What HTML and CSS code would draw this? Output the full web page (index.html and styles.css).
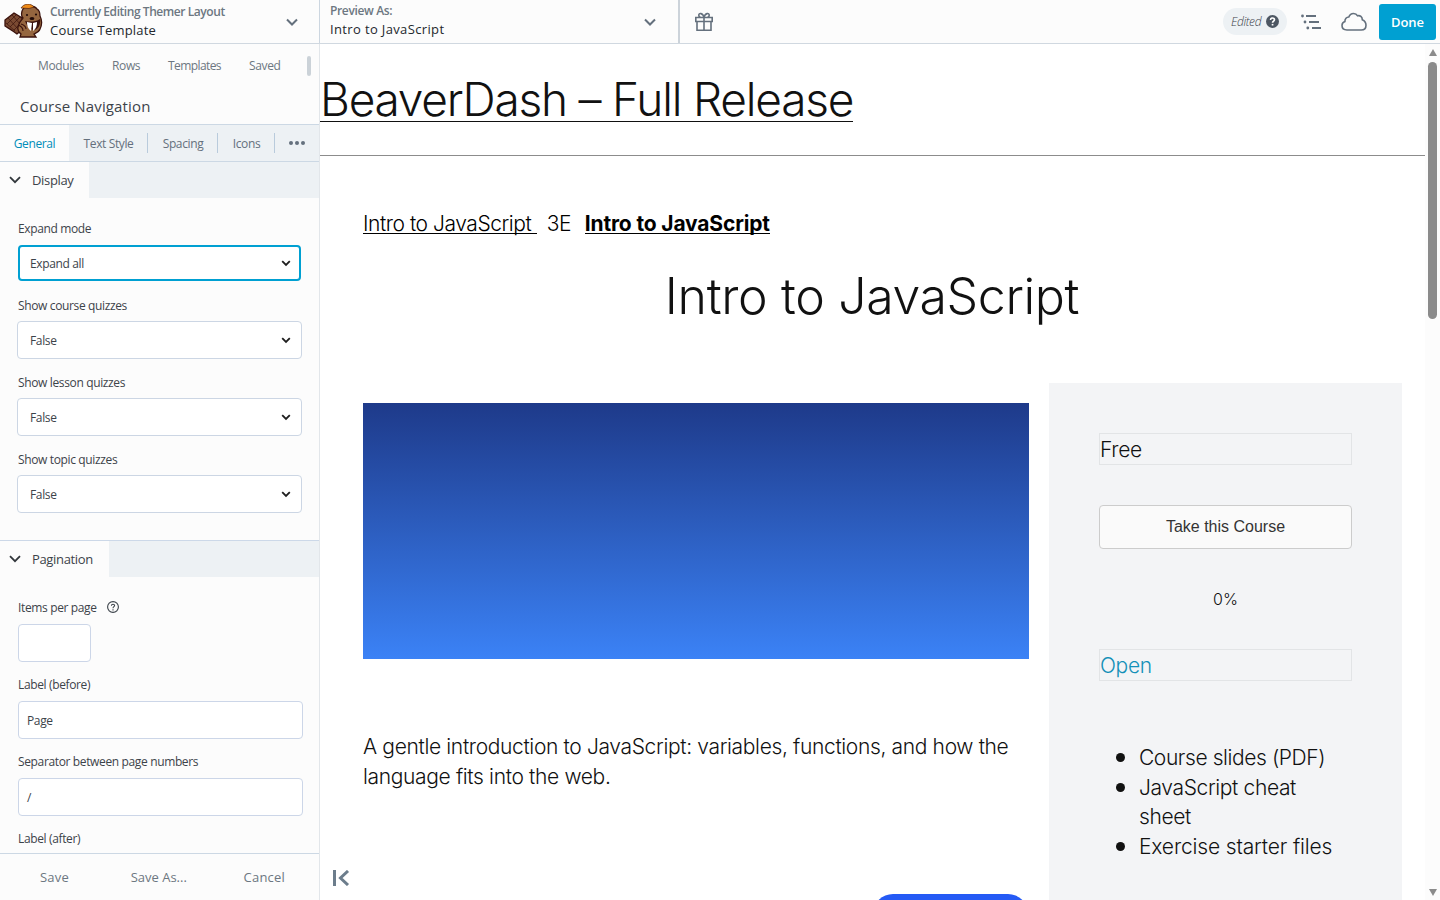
FILE: index.html
```html
<!DOCTYPE html>
<html lang="en">
<head>
    <meta charset="UTF-8">
    <meta name="viewport" content="width=device-width, initial-scale=1.0">
    <title>Course Template</title>
    <link rel="stylesheet" href="styles.css">
</head>
<body>
    <header class="topbar">
        <div class="layout-menu">
            <svg class="logo" viewBox="0 0 39 34" width="39" height="34">
                <path d="M1 16l9-7 8 5 1 11-6 5C8 26 4 24 1 22z" fill="#7a4a32" stroke="#3a120c" stroke-width="1.300"/>
                <path d="M4 14l11 12M8 11l9 10M2 19l9 8M3 20l9-9M6 23l10-10M10 26l8-8" stroke="#3a120c" stroke-width=".7" fill="none"/>
                <path d="M19 5c2-4 11-4 14 0 2 1 3 4 3 7 2 4 2 9 0 13-1 3-4 4-6 5l2 3H16l1-3c-3-2-4-6-2-10 1-3 3-4 4-6-2-2-2-6 0-9z" fill="#95663f" stroke="#3a120c" stroke-width="1.300"/>
                <path d="M17 4c3-5 10-5 13-1l-5 1.500z" fill="#ee8a17" stroke="#3a120c" stroke-width=".6"/>
                <path d="M14 21c3 1 5 3 5 6M17 20c3 1 5 3 5 5" stroke="#3a120c" stroke-width="1.100" fill="none"/>
                <path d="M21 17c4 1 11 1 15-2 1 5-2 11-6 11-4 0-7-4-9-9z" fill="#3a120c"/>
                <path d="M23 18l5 1-1 8c-3-2-4-5-4-9zM29 19l4-1c0 4-1 7-4 9z" fill="#fff"/>
                <ellipse cx="28" cy="14.500" rx="2.400" ry="1.600" fill="#210b08"/>
                <circle cx="23" cy="11" r="1.100" fill="#210b08"/>
                <circle cx="32" cy="10.500" r="1.100" fill="#210b08"/>
            </svg>
            <div class="menu-text">
                <div class="menu-label"><span class="t-editing">Currently Editing Themer Layout</span></div>
                <div class="menu-value"><span class="t-template">Course Template</span></div>
            </div>
            <svg class="chevron" width="14" height="14" viewBox="0 0 14 14"><path d="M2 4.500l5 5 5-5"/></svg>
        </div>
        <div class="preview-menu">
            <div class="menu-text">
                <div class="menu-label"><span class="t-preview">Preview As:</span></div>
                <div class="menu-value"><span class="t-previewed">Intro to JavaScript</span></div>
            </div>
            <svg class="chevron" width="14" height="14" viewBox="0 0 14 14"><path d="M2 4.500l5 5 5-5"/></svg>
        </div>
        <div class="actions">
            <svg class="gift" width="20" height="20" viewBox="0 0 20 20">
                <path d="M1.800 5.500h16.400v4H1.800zM3 9.500h14v8.700H3zM10 5.500v12.700M10 5.300C9 1 4.500.5 4.800 3.300c.1 1.300 1 2 2 2M10 5.300c1-4.300 5.500-4.800 5.200-2-.1 1.300-1 2-2 2"/>
            </svg>
            <div class="status">
                <span class="t-edited">Edited</span>
                <svg width="13" height="13" viewBox="0 0 13 13">
                    <circle cx="6.500" cy="6.500" r="6.500" fill="#4d5763"/>
                    <path d="M4.500 5c0-2.600 4-2.500 4-.2 0 1.500-2 1.400-2 2.900" fill="none" stroke="#fff" stroke-width="1.600"/>
                    <rect x="5.700" y="8.900" width="1.700" height="1.600" fill="#fff"/>
                </svg>
            </div>
            <svg class="outline" width="20" height="16" viewBox="0 0 20 16">
                <path d="M5 2h10M8 8h10M11 14h9" stroke="#64707d" stroke-width="1.800"/>
                <circle cx="1.500" cy="2" r="1.400" fill="#64707d"/>
                <circle cx="4" cy="8" r="1.400" fill="#64707d"/>
                <circle cx="6.800" cy="14" r="1.400" fill="#64707d"/>
            </svg>
            <svg class="cloud" width="26" height="20" viewBox="0 0 26 20">
                <path d="M6 18C2.800 18 1 16 1 13.600c0-2 1.300-3.500 2.900-4C3.800 6.800 5.500 5 7.800 5 8.800 2.500 10.400 1.500 12.500 1.500c1.800 0 3.300.9 4.100 2.300 2.400-.6 4.800 1 4.700 4 2.200 1 3.700 3 3.700 5.400 0 2.900-2 4.800-4.800 4.800z"/>
            </svg>
            <button class="done">Done</button>
        </div>
    </header>

    <div class="workspace">
        <aside class="panel">
            <nav class="panel-nav">
                <span class="nav-modules">Modules</span>
                <span class="nav-rows">Rows</span>
                <span class="nav-templates">Templates</span>
                <span class="nav-saved">Saved</span>
                <i class="handle"></i>
            </nav>
            <h2 class="panel-title">Course Navigation</h2>
            <div class="tabs">
                <div class="tab tab-general active">General</div>
                <div class="tab tab-text">Text Style</div>
                <div class="tab tab-spacing">Spacing</div>
                <div class="tab tab-icons">Icons</div>
                <div class="tab tab-more"><i></i><i></i><i></i></div>
            </div>
            <div class="settings">
                <section class="section">
                    <div class="section-head">
                        <div class="section-name display">
                            <svg width="12" height="8" viewBox="0 0 12 8"><path d="M1 1.200l5 5 5-5"/></svg>
                            <span>Display</span>
                        </div>
                    </div>
                    <div class="fields">
                        <div class="field">
                            <label>Expand mode</label>
                            <div class="select focused"><span>Expand all</span><svg width="10" height="7" viewBox="0 0 10 7"><path d="M1.200 1.200L5 5l3.800-3.800"/></svg></div>
                        </div>
                        <div class="field">
                            <label>Show course quizzes</label>
                            <div class="select"><span>False</span><svg width="10" height="7" viewBox="0 0 10 7"><path d="M1.200 1.200L5 5l3.800-3.800"/></svg></div>
                        </div>
                        <div class="field">
                            <label>Show lesson quizzes</label>
                            <div class="select"><span>False</span><svg width="10" height="7" viewBox="0 0 10 7"><path d="M1.200 1.200L5 5l3.800-3.800"/></svg></div>
                        </div>
                        <div class="field">
                            <label>Show topic quizzes</label>
                            <div class="select"><span>False</span><svg width="10" height="7" viewBox="0 0 10 7"><path d="M1.200 1.200L5 5l3.800-3.800"/></svg></div>
                        </div>
                    </div>
                </section>
                <section class="section bordered">
                    <div class="section-head">
                        <div class="section-name pagination">
                            <svg width="12" height="8" viewBox="0 0 12 8"><path d="M1 1.200l5 5 5-5"/></svg>
                            <span>Pagination</span>
                        </div>
                    </div>
                    <div class="fields">
                        <div class="field">
                            <label>Items per page</label>
                            <svg class="help" width="12" height="12" viewBox="0 0 12 12">
                                <circle cx="6" cy="6" r="5.400"/>
                                <path d="M4.400 4.800c0-2 3.200-1.900 3.200-.2C7.600 5.700 6 5.700 6 7.200M6 8.200v1.200"/>
                            </svg>
                            <div class="input small"></div>
                        </div>
                        <div class="field">
                            <label>Label (before)</label>
                            <div class="input">Page</div>
                        </div>
                        <div class="field">
                            <label>Separator between page numbers</label>
                            <div class="input">/</div>
                        </div>
                        <div class="field">
                            <label>Label (after)</label>
                        </div>
                    </div>
                </section>
            </div>
            <footer class="panel-footer">
                <span>Save</span>
                <span class="save-as">Save As...</span>
                <span>Cancel</span>
            </footer>
        </aside>

        <main class="canvas">
            <div class="site-header"><a class="site-title">BeaverDash – Full Release</a></div>
            <div class="page">
                <div class="breadcrumbs"><a class="crumb">Intro to JavaScript&nbsp;</a><span class="crumb-sep">3E</span><a class="crumb-current">Intro to JavaScript</a></div>
                <h1 class="page-title">Intro to JavaScript</h1>
                <div class="columns">
                    <div class="content">
                        <div class="cover"></div>
                        <p class="intro">A gentle introduction to JavaScript: variables, functions, and how the language fits into the web.</p>
                    </div>
                    <div class="card">
                        <div class="box">Free</div>
                        <button class="take">Take this Course</button>
                        <div class="progress">0%</div>
                        <div class="box open">Open</div>
                        <ul class="materials">
                            <li class="slides">Course slides (PDF)</li>
                            <li class="cheat">JavaScript cheat sheet</li>
                            <li class="files">Exercise starter files</li>
                        </ul>
                    </div>
                </div>
            </div>
            <div class="pill"></div>
            <svg class="collapse" width="17" height="16" viewBox="0 0 17 16"><path d="M1.500 0v16M15 1L7.500 8l7.500 7"/></svg>
        </main>
        <div class="scrollbar">
            <i class="arrow-up"></i>
            <i class="thumb"></i>
            <i class="arrow-down"></i>
        </div>
    </div>
</body>
</html>
```
FILE: styles.css
```css
* {
    margin: 0;
    padding: 0;
    box-sizing: border-box;
}

body {
    width: 1440px;
    height: 900px;
    overflow: hidden;
    background: #fff;
    font-family: "Open Sans", "Noto Sans", sans-serif;
    font-size: 12px;
    color: #3c434a;
}

span, label, a {
    display: inline-block;
    white-space: nowrap;
}

/* Top bar */
.topbar {
    display: flex;
    height: 44px;
    background: #fcfcfc;
    border-bottom: 1px solid #d0d8e0;
}

.layout-menu {
    display: flex;
    width: 320px;
    padding: 3px 20px 0 4px;
    border-right: 1px solid #ccd6e0;
}

.logo {
    flex: none;
    margin: 1px 7px 0 0;
}

.menu-text {
    flex: 1;
}

.menu-label {
    height: 18px;
    line-height: 18px;
    font-weight: 600;
    letter-spacing: -0.44px;
    color: #6c7781;
}

.menu-value {
    height: 18px;
    line-height: 18px;
    font-size: 13px;
    color: #23282d;
}

.t-preview {
    letter-spacing: -0.36px;
}

.t-template {
    letter-spacing: 0.2px;
}

.t-previewed {
    letter-spacing: 0.36px;
}

.chevron {
    margin-top: 12px;
    fill: none;
    stroke: #64707d;
    stroke-width: 2;
}

.preview-menu {
    display: flex;
    width: 360px;
    padding: 2px 21px 0 10px;
    border-right: 2px solid #ccd3da;
}

.preview-menu .chevron {
    margin-top: 13px;
}

.actions {
    flex: 1;
    display: flex;
    align-items: center;
    padding: 0 4px 0 14px;
}

.gift, .cloud {
    fill: none;
    stroke: #64707d;
    stroke-width: 1.6;
}

.status {
    display: flex;
    align-items: center;
    justify-content: space-between;
    width: 64px;
    height: 27px;
    margin: 0 14px 0 auto;
    padding: 0 8px;
    border-radius: 14px;
    background: #edf1f4;
    font-size: 12px;
    font-style: italic;
    font-weight: 300;
    letter-spacing: -0.4px;
}

.cloud {
    margin: 1px 12px 0 20px;
}

.done {
    width: 57px;
    height: 36px;
    border: 0;
    border-radius: 3px;
    background: #00a0d2;
    color: #fff;
    font: 600 13px "Open Sans", sans-serif;
}

.workspace {
    display: flex;
    height: 856px;
}

/* Settings panel */
.panel {
    display: flex;
    flex-direction: column;
    width: 320px;
    background: #fcfcfc;
    border-right: 1px solid #e2e6ea;
}

.panel-nav {
    display: flex;
    align-items: center;
    height: 44px;
    padding: 0 8px 0 38px;
    letter-spacing: -0.35px;
    color: #6c7781;
}

.nav-modules { width: 74px; }
.nav-rows { width: 56px; }
.nav-templates { width: 81px; letter-spacing: -0.58px; }

.panel-nav span {
    margin-top: -1px;
}

.handle {
    width: 4px;
    height: 20px;
    margin-left: auto;
    border-radius: 2px;
    background: #cbd2d8;
}

.panel-title {
    height: 37px;
    padding-left: 20px;
    line-height: 37px;
    border-bottom: 1px solid #ccd8e4;
    font-size: 15px;
    font-weight: 400;
    letter-spacing: 0.15px;
}

.tabs {
    display: flex;
    height: 37px;
    background: #edf1f4;
    border-bottom: 1px solid #ccd8e4;
    letter-spacing: -0.38px;
    color: #64707d;
}

.tab {
    position: relative;
    line-height: 38px;
    text-align: center;
    white-space: nowrap;
}

.tab + .tab + .tab::before {
    content: "";
    position: absolute;
    left: -1px;
    top: 8px;
    width: 1px;
    height: 20px;
    background: #b9cbdc;
}

.tab-general { width: 69px; }
.tab-text { width: 79px; }
.tab-spacing { width: 70px; }
.tab-icons { width: 57px; }

.tab.active {
    background: #fcfcfc;
    color: #008db9;
}

.tab-more {
    display: flex;
    align-items: center;
    gap: 2px;
    padding: 0 0 1px 14px;
}

.tab-more i {
    width: 4px;
    height: 4px;
    border-radius: 50%;
    background: #64707d;
}

.settings {
    flex: 1;
    overflow: hidden;
}

.section.bordered {
    border-top: 1px solid #ccd8e8;
}

.section-head {
    background: #edf1f4;
    height: 36px;
}

.section-name {
    display: flex;
    align-items: center;
    gap: 11px;
    height: 36px;
    padding-left: 9px;
    background: #fcfcfc;
    font-size: 13px;
    letter-spacing: -0.34px;
}

.section-name svg {
    fill: none;
    stroke: #32373c;
    stroke-width: 1.8;
}

.display { width: 89px; }
.pagination { width: 109px; }

.fields {
    padding: 21px 17px 13px;
    letter-spacing: -0.36px;
}

.field {
    height: 77px;
}

.field label {
    height: 20px;
    line-height: 20px;
    margin-left: 1px;
}

.select {
    display: flex;
    align-items: center;
    justify-content: space-between;
    width: 285px;
    height: 38px;
    margin-top: 5px;
    padding: 0 10px 0 12px;
    border: 1px solid #ccd6e4;
    border-radius: 4px;
    background: #fff;
}

.select.focused {
    width: 283px;
    height: 36px;
    margin: 6px 0 0 1px;
    padding: 0 8px 0 10px;
    border: 2px solid #00a0d2;
}

.select svg {
    fill: none;
    stroke: #1e1e1e;
    stroke-width: 1.8;
}

.input {
    width: 285px;
    height: 38px;
    margin: 6px 0 0 1px;
    padding-left: 8px;
    border: 1px solid #ccd6e8;
    border-radius: 4px;
    background: #fff;
    line-height: 38px;
}

.input.small {
    width: 73px;
}

.help {
    margin: 3px 0 0 8px;
    vertical-align: top;
    fill: none;
    stroke: #3c434a;
    stroke-width: 1.1;
}

.panel-footer {
    display: flex;
    justify-content: space-between;
    height: 47px;
    padding: 0 34px 0 40px;
    border-top: 1px solid #ccd8e4;
    line-height: 47px;
    font-size: 13px;
    letter-spacing: 0.2px;
    color: #6c7781;
}

.save-as {
    padding-left: 5px;
    letter-spacing: 0;
}

/* Page preview */
.canvas {
    position: relative;
    width: 1105px;
    overflow: hidden;
    font-family: Inter, sans-serif;
    font-weight: 300;
    font-size: 21px;
    line-height: 29.7px;
    color: #111;
}

.site-header {
    height: 112px;
    padding-top: 27px;
    border-bottom: 1px solid #8c8c8c;
}

.site-title {
    height: 51px;
    border-bottom: 1px solid #111;
    line-height: 57px;
    font-size: 46px;
    font-weight: 350;
    letter-spacing: -1.22px;
}

.page {
    padding: 53px 23px 0 43px;
}

.breadcrumbs {
    display: flex;
    height: 30px;
    color: #000;
}

.crumb, .crumb-current {
    height: 25px;
    border-bottom: 1px solid #000;
}

.crumb {
    letter-spacing: -0.45px;
}

.crumb-sep {
    width: 48px;
    padding-left: 10px;
    letter-spacing: -0.4px;
}

.crumb-current {
    font-weight: 700;
    letter-spacing: -0.15px;
}

.page-title {
    height: 144px;
    padding-top: 27px;
    line-height: 60px;
    text-align: center;
    font-size: 50px;
    font-weight: 350;
    letter-spacing: -0.35px;
    margin: 0 21px 0 0;
}

.columns {
    display: flex;
    gap: 20px;
}

.content {
    width: 666px;
    padding-top: 20px;
}

.cover {
    height: 256px;
    margin-bottom: 73px;
    background: linear-gradient(#1e3a8a, #3b82f6);
}

.intro {
    letter-spacing: -0.35px;
}

.card {
    width: 353px;
    height: 560px;
    padding: 50px;
    background: #f3f4f6;
}

.box {
    height: 32px;
    padding-top: 1px;
    border: 1px solid #e2e4e6;
    letter-spacing: -0.35px;
}

.take {
    display: block;
    width: 253px;
    height: 44px;
    margin: 40px 0;
    border: 1px solid #ccc;
    border-radius: 4px;
    background: #fafafa;
    color: #333;
    font: 16px "Liberation Sans", sans-serif;
}

.progress {
    height: 60px;
    line-height: 20px;
    text-align: center;
    font-size: 16px;
}

.open {
    color: #1490b8;
}

.materials {
    padding: 62px 0 0 40px;
    list-style: none;
}

.materials li {
    position: relative;
}

.materials .slides { letter-spacing: -0.42px; }
.materials .cheat { letter-spacing: -0.37px; }
.materials .files { letter-spacing: -0.15px; }

.materials li::before {
    content: "";
    position: absolute;
    left: -23px;
    top: 10px;
    width: 9px;
    height: 9px;
    border-radius: 50%;
    background: #111;
}

.pill {
    position: absolute;
    left: 553px;
    top: 850px;
    width: 155px;
    height: 40px;
    border-radius: 20px;
    background: #255af5;
}

.collapse {
    position: absolute;
    left: 13px;
    top: 826px;
    fill: none;
    stroke: #6c7d8c;
    stroke-width: 3;
}

.scrollbar {
    display: flex;
    flex-direction: column;
    align-items: center;
    width: 15px;
    background: #fcfcfc;
}

.arrow-up, .arrow-down {
    width: 0;
    border: 4.5px solid transparent;
}

.arrow-up {
    margin-top: 5px;
    border-top: 0;
    border-bottom: 7px solid #8b8b8b;
}

.arrow-down {
    margin: auto 0 4px;
    border-bottom: 0;
    border-top: 7px solid #8b8b8b;
}

.thumb {
    width: 9px;
    height: 257px;
    margin-top: 6px;
    border-radius: 5px;
    background: #8b8b8b;
}
```
